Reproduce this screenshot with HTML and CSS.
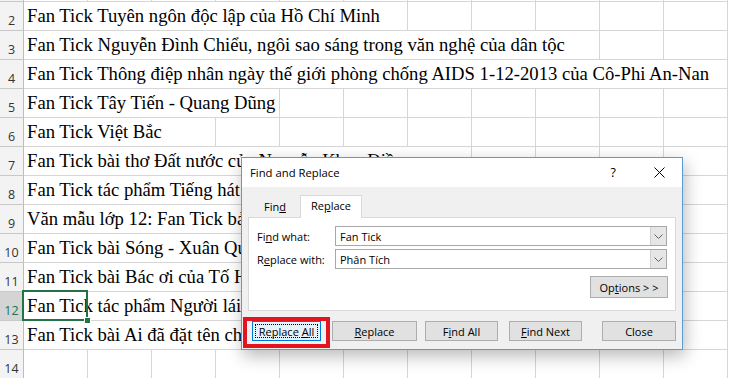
FILE: index.html
```html
<!DOCTYPE html>
<html lang="vi">
<head>
    <meta charset="UTF-8">
    <meta name="viewport" content="width=device-width, initial-scale=1.0">
    <title>Find and Replace</title>
    <link rel="stylesheet" href="styles.css">
</head>
<body>

<div class="sheet">
    <div class="row">
        <div class="head"></div>
        <div class="cell"></div><div class="cell"></div><div class="cell"></div><div class="cell"></div>
        <div class="cell"></div><div class="cell"></div><div class="cell"></div><div class="cell"></div>
        <div class="cell"></div><div class="cell"></div><div class="cell"></div>
    </div>
    <div class="row">
        <div class="head">2</div>
        <div class="cell text s6">Fan Tick Tuyên ngôn độc lập của Hồ Chí Minh</div>
        <div class="cell"></div><div class="cell"></div><div class="cell"></div>
        <div class="cell"></div><div class="cell"></div>
    </div>
    <div class="row">
        <div class="head">3</div>
        <div class="cell text s9">Fan Tick Nguyễn Đình Chiểu, ngôi sao sáng trong văn nghệ của dân tộc</div>
        <div class="cell"></div><div class="cell"></div>
    </div>
    <div class="row">
        <div class="head">4</div>
        <div class="cell text s11">Fan Tick Thông điệp nhân ngày thế giới phòng chống AIDS 1-12-2013 của Cô-Phi An-Nan</div>
    </div>
    <div class="row">
        <div class="head">5</div>
        <div class="cell text s4">Fan Tick Tây Tiến - Quang Dũng</div>
        <div class="cell"></div><div class="cell"></div><div class="cell"></div><div class="cell"></div>
        <div class="cell"></div><div class="cell"></div><div class="cell"></div>
    </div>
    <div class="row">
        <div class="head">6</div>
        <div class="cell text s3">Fan Tick Việt Bắc</div>
        <div class="cell"></div><div class="cell"></div><div class="cell"></div><div class="cell"></div>
        <div class="cell"></div><div class="cell"></div><div class="cell"></div><div class="cell"></div>
    </div>
    <div class="row">
        <div class="head">7</div>
        <div class="cell text s7">Fan Tick bài thơ Đất nước của Nguyễn Khoa Điềm</div>
        <div class="cell"></div><div class="cell"></div><div class="cell"></div><div class="cell"></div>
    </div>
    <div class="row">
        <div class="head">8</div>
        <div class="cell text s6">Fan Tick tác phẩm Tiếng hát con tàu</div>
        <div class="cell"></div><div class="cell"></div><div class="cell"></div><div class="cell"></div>
        <div class="cell"></div>
    </div>
    <div class="row">
        <div class="head">9</div>
        <div class="cell text s7">Văn mẫu lớp 12: Fan Tick bản Tuyên ngôn Độc lập</div>
        <div class="cell"></div><div class="cell"></div><div class="cell"></div><div class="cell"></div>
    </div>
    <div class="row">
        <div class="head">10</div>
        <div class="cell text s5">Fan Tick bài Sóng - Xuân Quỳnh</div>
        <div class="cell"></div><div class="cell"></div><div class="cell"></div><div class="cell"></div>
        <div class="cell"></div><div class="cell"></div>
    </div>
    <div class="row">
        <div class="head">11</div>
        <div class="cell text s5">Fan Tick bài Bác ơi của Tố Hữu</div>
        <div class="cell"></div><div class="cell"></div><div class="cell"></div><div class="cell"></div>
        <div class="cell"></div><div class="cell"></div>
    </div>
    <div class="row">
        <div class="head active">12</div>
        <div class="cell text s6">Fan Tick tác phẩm Người lái đò sông Đà<span class="selection"></span></div>
        <div class="cell"></div><div class="cell"></div><div class="cell"></div><div class="cell"></div>
        <div class="cell"></div>
    </div>
    <div class="row">
        <div class="head">13</div>
        <div class="cell text s6">Fan Tick bài Ai đã đặt tên cho dòng sông</div>
        <div class="cell"></div><div class="cell"></div><div class="cell"></div><div class="cell"></div>
        <div class="cell"></div>
    </div>
    <div class="row">
        <div class="head">14</div>
        <div class="cell"></div><div class="cell"></div><div class="cell"></div><div class="cell"></div>
        <div class="cell"></div><div class="cell"></div><div class="cell"></div><div class="cell"></div>
        <div class="cell"></div><div class="cell"></div><div class="cell"></div>
    </div>
</div>

<div class="dialog">
    <div class="titlebar">
        <span class="title">Find and Replace</span>
        <span class="help">?</span>
        <svg class="close" width="11" height="11" viewBox="0 0 11 11">
            <path d="M0.5 0.5 L10.5 10.5 M10.5 0.5 L0.5 10.5" stroke="#000" stroke-width="1" fill="none"/>
        </svg>
    </div>
    <div class="dialog-body">
        <div class="tabs">
            <div class="tab">Fin<u>d</u></div>
            <div class="tab active">Re<u>p</u>lace</div>
        </div>
        <div class="panel">
            <div class="field">
                <span class="label">Fi<u>n</u>d what:</span>
                <div class="combo">
                    <span class="value">Fan Tick</span>
                    <span class="drop">
                        <svg width="9" height="5" viewBox="0 0 9 5"><path d="M0.5 0.5 L4.5 4.5 L8.5 0.5" stroke="#606060" fill="none"/></svg>
                    </span>
                </div>
            </div>
            <div class="field">
                <span class="label">R<u>e</u>place with:</span>
                <div class="combo">
                    <span class="value">Phân Tích</span>
                    <span class="drop">
                        <svg width="9" height="5" viewBox="0 0 9 5"><path d="M0.5 0.5 L4.5 4.5 L8.5 0.5" stroke="#606060" fill="none"/></svg>
                    </span>
                </div>
            </div>
            <div class="options-row">
                <button class="btn options">Op<u>t</u>ions &gt; &gt;</button>
            </div>
        </div>
        <div class="actions">
            <button class="btn primary btn-all"><span class="focus">Replace <u>A</u>ll</span><span class="mark"></span></button>
            <button class="btn btn-replace"><u>R</u>eplace</button>
            <button class="btn btn-findall">F<u>i</u>nd All</button>
            <button class="btn btn-findnext"><u>F</u>ind Next</button>
            <button class="btn btn-close">Close</button>
        </div>
    </div>
</div>

</body>
</html>
```

FILE: styles.css
```css
body, html {
    margin: 0;
    padding: 0;
    width: 729px;
    height: 378px;
    overflow: hidden;
    background: #fff;
}

.sheet {
    margin-top: -27px;
}

.row {
    display: grid;
    grid-template-columns: 24px repeat(11, 64px);
    height: 29px;
}

.head {
    box-sizing: border-box;
    background: #f3f3f3;
    border-right: 1px solid #bdbdbd;
    border-bottom: 1px solid #c8c8c8;
    display: flex;
    justify-content: center;
    align-items: flex-end;
    padding-bottom: 2px;
    font-family: "Open Sans", sans-serif;
    font-size: 12.5px;
    line-height: 14px;
    color: #333;
}

.head.active {
    background: #d4d4d4;
    color: #217346;
}

.cell {
    box-sizing: border-box;
    border-right: 1px solid #d6d6d6;
    border-bottom: 1px solid #d6d6d6;
}

.text {
    position: relative;
    white-space: nowrap;
    padding-left: 3px;
    font-family: "Liberation Serif", "Times New Roman", serif;
    font-size: 18.67px;
    line-height: 28px;
    color: #000;
}

.s3 { grid-column: span 3; }
.s4 { grid-column: span 4; }
.s5 { grid-column: span 5; }
.s6 { grid-column: span 6; }
.s7 { grid-column: span 7; }
.s9 { grid-column: span 9; }
.s11 { grid-column: span 11; }

.selection {
    position: absolute;
    left: -2px;
    top: -2px;
    width: 62px;
    height: 27px;
    border: 2px solid #217346;
}

.selection::after {
    content: "";
    position: absolute;
    right: -5px;
    bottom: -5px;
    width: 5px;
    height: 5px;
    background: #217346;
    border: 1px solid #fff;
}

/* dialog */

.dialog {
    position: absolute;
    left: 241px;
    top: 157px;
    width: 442px;
    height: 193px;
    box-sizing: border-box;
    border: 1px solid #5b9bd5;
    background: #f0f0f0;
    box-shadow: 2px 6px 16px rgba(0, 0, 0, 0.28);
    font-family: "Open Sans", sans-serif;
    font-size: 11px;
    color: #000;
    display: flex;
    flex-direction: column;
}

.titlebar {
    height: 29px;
    background: #fff;
    display: flex;
    align-items: center;
    padding-left: 8px;
}

.title {
    flex: 1;
    font-size: 11.3px;
}

.help {
    margin-right: 38px;
    font-size: 12.5px;
}

.close {
    margin-right: 17px;
}

.dialog-body {
    flex: 1;
    padding: 8px 0 0 6px;
}

.tabs {
    display: flex;
    align-items: flex-end;
    height: 22px;
    padding-left: 2px;
}

.tab {
    box-sizing: border-box;
    width: 50px;
    height: 19px;
    text-align: center;
    line-height: 18px;
}

.tab.active {
    width: 62px;
    height: 23px;
    margin-bottom: -1px;
    background: #fff;
    border: 1px solid #d9d9d9;
    border-bottom: none;
    position: relative;
    line-height: 20px;
}

.panel {
    box-sizing: border-box;
    width: 428px;
    height: 94px;
    background: #fff;
    border: 1px solid #d9d9d9;
    padding: 8px 7px 0 8px;
}

.field {
    display: flex;
    align-items: center;
    margin-bottom: 3px;
}

.label {
    width: 78px;
}

.combo {
    box-sizing: border-box;
    width: 332px;
    height: 20px;
    border: 1px solid #a8a8a8;
    display: flex;
    align-items: center;
}

.value {
    flex: 1;
    padding-left: 4px;
}

.drop {
    box-sizing: border-box;
    width: 16px;
    height: 18px;
    background: #e6e6e6;
    border-left: 1px solid #cfcfcf;
    display: flex;
    align-items: center;
    justify-content: center;
}

.options-row {
    display: flex;
    justify-content: flex-end;
    margin-top: 7px;
}

.btn {
    box-sizing: border-box;
    height: 20px;
    padding: 0;
    background: #e1e1e1;
    border: 1px solid #adadad;
    font-family: "Open Sans", sans-serif;
    font-size: 11px;
    color: #000;
    position: relative;
}

.options {
    width: 78px;
    height: 22px;
}

.actions {
    display: flex;
    margin-top: 10px;
    padding-left: 4px;
}

.primary {
    background: #e5f1fb;
    border-color: #0078d7;
}

.focus {
    position: absolute;
    left: 2px;
    top: 2px;
    right: 2px;
    bottom: 2px;
    border: 1px dotted #000;
    text-align: center;
    line-height: 14px;
    white-space: nowrap;
}

.mark {
    position: absolute;
    left: -10px;
    top: -5px;
    width: 87px;
    height: 31px;
    box-sizing: border-box;
    border: 4px solid #e3141f;
}

.btn-all { width: 69px; }
.btn-replace { width: 85px; margin-left: 11px; }
.btn-findall { width: 73px; margin-left: 8px; }
.btn-findnext { width: 73px; margin-left: 11px; }
.btn-close { width: 74px; margin-left: 20px; }
```
